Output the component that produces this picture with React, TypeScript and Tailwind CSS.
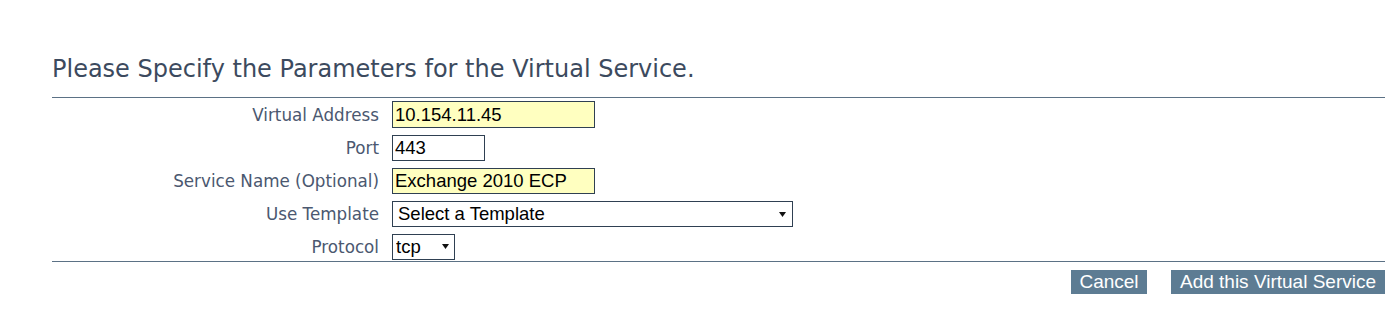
import React from "react";

function Arrow({ className }: { className: string }) {
  return (
    <svg className={className} width="7" height="5" viewBox="0 0 7 5">
      <path d="M0 0H7L3.5 5Z" fill="#111" />
    </svg>
  );
}

export default function App() {
  const label =
    "text-right text-[16.75px] leading-[26px] text-[#4b5870] font-['DejaVu_Sans',Verdana,sans-serif] whitespace-nowrap";
  const inputBase =
    "h-[26px] border border-[#2f4052] px-[2px] text-[18.5px] leading-[24px] text-black font-['Liberation_Sans',Arial,sans-serif] outline-none";
  return (
    <div className="w-[1400px] h-[309px] bg-white">
      <div className="pl-[52px] w-[1385px]">
        <h1 className="pt-[55px] mb-[14px] text-[24px] leading-[28px] text-[#3c4a5e] font-['DejaVu_Sans',Verdana,sans-serif] font-normal whitespace-nowrap">
          Please Specify the Parameters for the Virtual Service.
        </h1>
        <div className="border-t border-[#5b7185] pt-[3px] pb-[1px]">
          <div className="grid grid-cols-[327px_auto] gap-x-[13px] gap-y-[7px] items-center">
            <div className={label}>Virtual Address</div>
            <div>
              <input
                className={`${inputBase} w-[203px] h-[27px] bg-[#ffffc0]`}
                defaultValue="10.154.11.45"
              />
            </div>
            <div className={label}>Port</div>
            <div>
              <input className={`${inputBase} w-[93px] bg-white`} defaultValue="443" />
            </div>
            <div className={label}>Service Name (Optional)</div>
            <div>
              <input
                className={`${inputBase} w-[203px] bg-[#ffffc0]`}
                defaultValue="Exchange 2010 ECP"
              />
            </div>
            <div className={label}>Use Template</div>
            <div>
              <div className="relative w-[401px]">
                <select
                  className={`${inputBase} w-[401px] appearance-none bg-white pl-[5px]`}
                  defaultValue="none"
                >
                  <option value="none">Select a Template</option>
                </select>
                <Arrow className="absolute left-[387px] top-[11px] pointer-events-none" />
              </div>
            </div>
            <div className={label}>Protocol</div>
            <div>
              <div className="relative w-[63px]">
                <select
                  className={`${inputBase} w-[63px] h-[25px] appearance-none bg-white pl-[3px]`}
                  defaultValue="tcp"
                >
                  <option value="tcp">tcp</option>
                </select>
                <Arrow className="absolute left-[50px] top-[10px] pointer-events-none" />
              </div>
            </div>
          </div>
        </div>
        <div className="border-t border-[#5b7185] pt-[8px] flex justify-end gap-[24px]">
          <button className="w-[76px] h-[24px] bg-[#5d7c93] text-white text-[19px] leading-[24px] font-['Liberation_Sans',Arial,sans-serif]">
            Cancel
          </button>
          <button className="w-[214px] h-[24px] bg-[#5d7c93] text-white text-[19px] leading-[24px] font-['Liberation_Sans',Arial,sans-serif]">
            Add this Virtual Service
          </button>
        </div>
      </div>
    </div>
  );
}
